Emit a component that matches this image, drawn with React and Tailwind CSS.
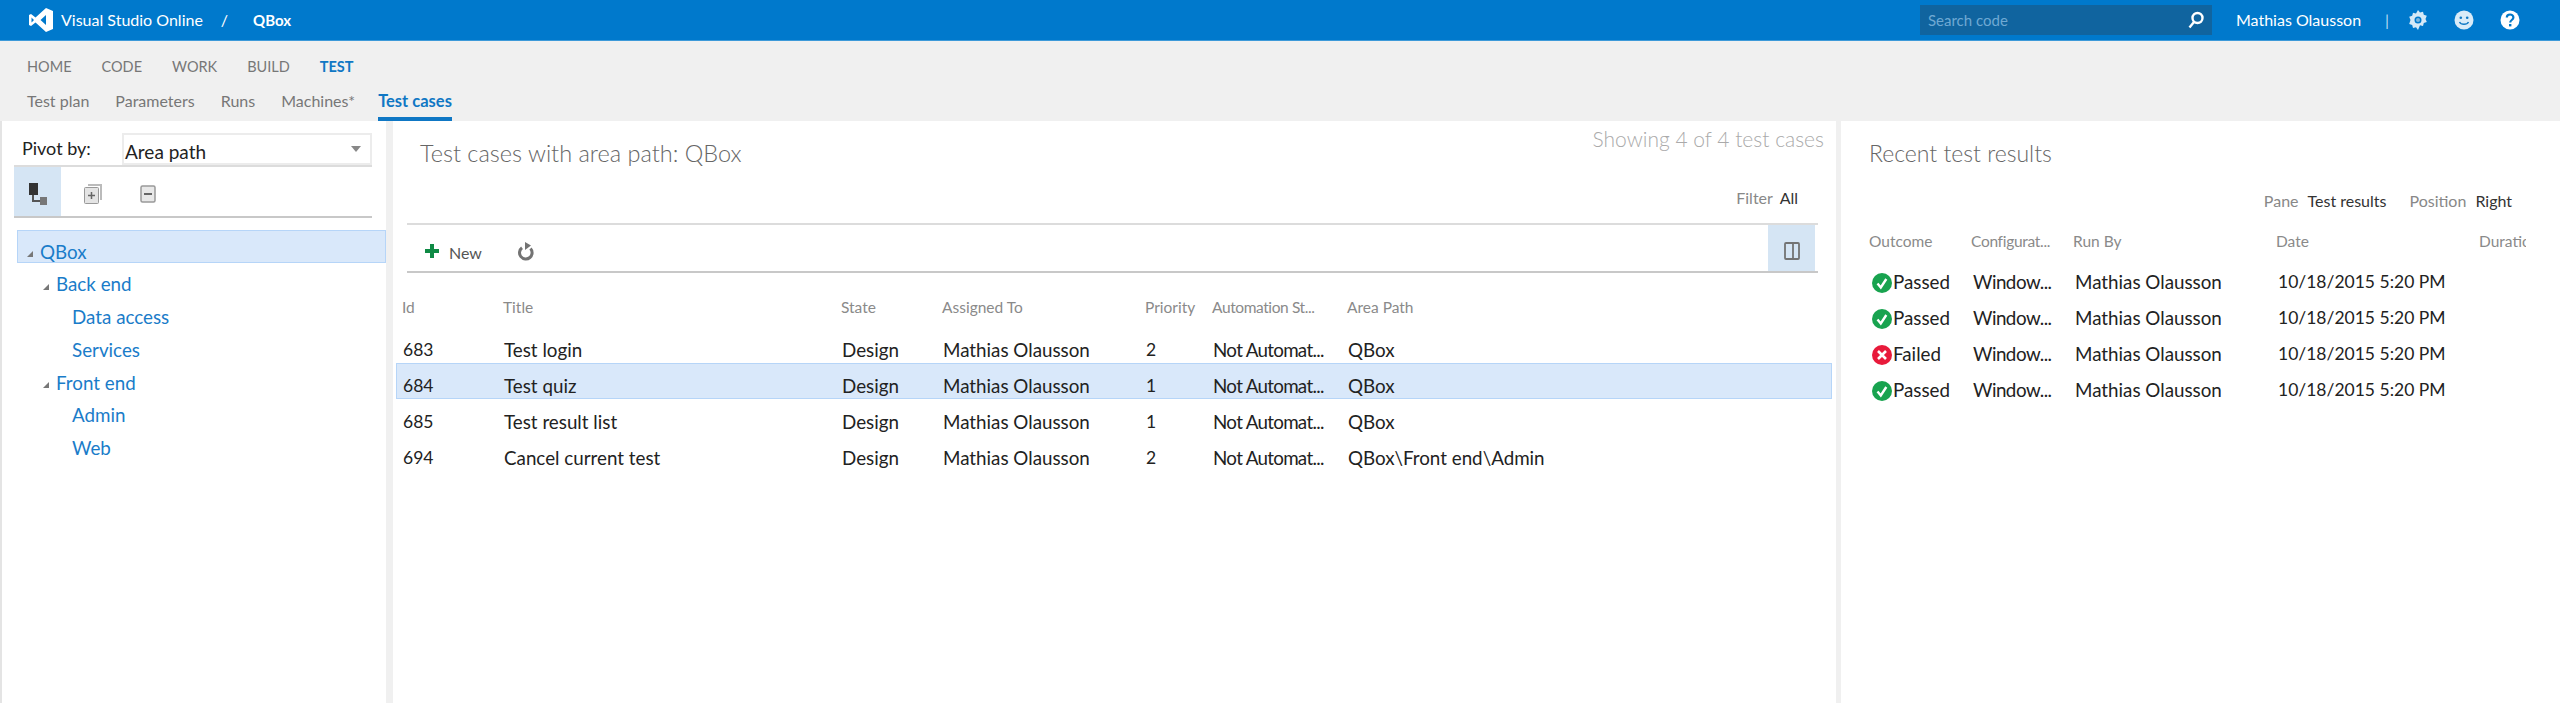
import React from "react";

const FONT = "font-['Lato','Open_Sans',sans-serif]";

const areaTree = [
  { label: "QBox", depth: 0, open: true, selected: true },
  { label: "Back end", depth: 1, open: true },
  { label: "Data access", depth: 2 },
  { label: "Services", depth: 2 },
  { label: "Front end", depth: 1, open: true },
  { label: "Admin", depth: 2 },
  { label: "Web", depth: 2 },
];

const testCases = [
  { id: 683, title: "Test login", priority: 2, area: "QBox" },
  { id: 684, title: "Test quiz", priority: 1, area: "QBox", selected: true },
  { id: 685, title: "Test result list", priority: 1, area: "QBox" },
  { id: 694, title: "Cancel current test", priority: 2, area: "QBox\\Front end\\Admin" },
];

const results = ["Passed", "Passed", "Failed", "Passed"];

function VsLogo() {
  return (
    <svg width="26" height="26" viewBox="0 0 26 26" className="ml-[28px] mr-[7px]">
      <path
        fill="#fff"
        fillRule="evenodd"
        d="M18 1l7 3v18l-7 3L7.5 15.5 3 19l-2-1V8l2-1 4.500 3.500zM18 8l-5.500 5 5.500 5zM3.500 10.500v5l2.500-2.500z"
      />
    </svg>
  );
}

function SearchIcon() {
  return (
    <svg width="18" height="18" viewBox="0 0 18 18" fill="none" stroke="#fff" strokeWidth="2.4">
      <circle cx="10.500" cy="7" r="5" />
      <path d="M7 11l-4.500 5.500" />
    </svg>
  );
}

function GearIcon() {
  return (
    <svg width="20" height="22" viewBox="0 0 20 22">
      <path
        fill="#d5e9f7"
        fillRule="evenodd"
        d="M10 1l2 2.500 3-.8 .8 3 3 1-1.300 3.300 1.300 3-3 1-.8 3-3-.8L10 21l-2-2.800-3 .8-.8-3-3-1L2.500 11 1.200 7.700l3-1 .8-3 3 .8zM10 7.500a3.500 3.500 0 1 0 0 7 3.500 3.500 0 0 0 0-7z"
      />
      <circle cx="10" cy="11" r="2" fill="#7db5dd" />
    </svg>
  );
}

function SmileIcon() {
  return (
    <svg width="20" height="20" viewBox="0 0 20 20">
      <circle cx="10" cy="10" r="9.500" fill="#d9ebf8" />
      <circle cx="6.800" cy="7.800" r="1.300" fill="#0f78c4" />
      <circle cx="13.200" cy="7.800" r="1.300" fill="#0f78c4" />
      <path d="M5.500 12c1.500 3 7.500 3 9 0" fill="none" stroke="#0f78c4" strokeWidth="1.400" />
    </svg>
  );
}

function HelpIcon() {
  return (
    <svg width="20" height="20" viewBox="0 0 20 20">
      <circle cx="10" cy="10" r="9.500" fill="#fff" />
      <path
        d="M6.800 7.500c0-4 6.600-4 6.600 0 0 2.500-3.200 2.500-3.200 5"
        fill="none"
        stroke="#0078c9"
        strokeWidth="2.200"
      />
      <rect x="9" y="14" width="2.400" height="2.400" fill="#0078c9" />
    </svg>
  );
}

function TreeViewIcon() {
  return (
    <svg width="20" height="24" viewBox="0 0 20 24">
      <rect x="1" y="1" width="9" height="12" fill="#333" />
      <path d="M5 13v6h8" fill="none" stroke="#555" strokeWidth="2" />
      <rect x="12" y="15" width="7" height="8" fill="#777" />
    </svg>
  );
}

function ExpandAllIcon() {
  return (
    <svg width="20" height="22" viewBox="0 0 20 22">
      <path d="M5 1h14v16h-2V3H5z" fill="#bbb" />
      <rect x="1.500" y="4.500" width="14" height="16" rx="1" fill="#e4e4e4" stroke="#999" />
      <path d="M5 12.500h7M8.500 9v7" stroke="#666" strokeWidth="1.500" />
    </svg>
  );
}

function CollapseAllIcon() {
  return (
    <svg width="16" height="20" viewBox="0 0 16 20">
      <rect x="1" y="2" width="14" height="16" rx="1.500" fill="#e8e8e8" stroke="#999" strokeWidth="1.500" />
      <path d="M4 10h8" stroke="#666" strokeWidth="2" />
    </svg>
  );
}

function TreeArrow() {
  return (
    <svg width="8" height="8" viewBox="0 0 8 8" className="mr-[6px] mt-[4px] shrink-0">
      <path d="M7 1v6H1z" fill="#777" />
    </svg>
  );
}

function PlusIcon() {
  return (
    <svg width="14" height="14" viewBox="0 0 14 14">
      <path d="M5 0h4v5h5v4H9v5H5V9H0V5h5z" fill="#0f8a45" />
    </svg>
  );
}

function RefreshIcon() {
  return (
    <svg width="18" height="20" viewBox="0 0 18 20">
      <path d="M13.500 6.500a6.300 6.300 0 1 1-8.500-.8" fill="none" stroke="#737373" strokeWidth="3" />
      <path d="M8 0v8l6-4.500z" fill="#737373" />
    </svg>
  );
}

function PaneIcon() {
  return (
    <svg width="16" height="18" viewBox="0 0 16 18">
      <rect x="1" y="1" width="14" height="16" rx="1" fill="none" stroke="#737373" strokeWidth="1.800" />
      <path d="M9 1v16" stroke="#737373" strokeWidth="1.800" />
    </svg>
  );
}

function OutcomeIcon({ outcome }) {
  if (outcome === "Failed") {
    return (
      <svg width="20" height="20" viewBox="0 0 20 20" className="mt-[2px] shrink-0">
        <circle cx="10" cy="10" r="10" fill="#e81a3b" />
        <path d="M6 6l8 8M14 6l-8 8" stroke="#fff" strokeWidth="2.600" />
      </svg>
    );
  }
  return (
    <svg width="20" height="20" viewBox="0 0 20 20" className="mt-[2px] shrink-0">
      <circle cx="10" cy="10" r="10" fill="#18a34f" />
      <path d="M5.500 10.500l3.300 4 5.500-8.500" fill="none" stroke="#fff" strokeWidth="2.400" />
    </svg>
  );
}

function Header() {
  return (
    <div className="flex h-[41px] items-center bg-[#0079cc] border-b border-[#3d9ad9] text-white text-[16px]">
      <VsLogo />
      <span>Visual Studio Online</span>
      <span className="ml-[18px]">/</span>
      <span className="ml-[25px] text-[15px] font-bold">QBox</span>
      <div className="ml-auto flex h-[30px] w-[292px] items-center justify-between bg-[#10649f] pl-[8px] pr-[7px] text-[#6fa9d3] text-[15px]">
        <span>Search code</span>
        <SearchIcon />
      </div>
      <span className="ml-[24px] w-[127px] whitespace-nowrap">Mathias Olausson</span>
      <span className="ml-[22px] text-[#b9dcf3]">|</span>
      <div className="ml-[19px] mr-[40px] flex items-center gap-[26px]">
        <GearIcon />
        <SmileIcon />
        <HelpIcon />
      </div>
    </div>
  );
}

function Nav() {
  const top = ["HOME", "CODE", "WORK", "BUILD"];
  const sub = ["Test plan", "Parameters", "Runs", "Machines*"];
  return (
    <div className="h-[80px] bg-[#f0f0f0] pl-[27px] pt-[16px]">
      <div className="flex h-[20px] items-center gap-[30px] text-[14.500px] text-[#777]">
        {top.map((t) => (
          <span key={t}>{t}</span>
        ))}
        <span className="font-bold text-[#0f77c4]">TEST</span>
      </div>
      <div className="mt-[12px] flex h-[32px] gap-[26px] text-[16px] text-[#777]">
        {sub.map((t) => (
          <span key={t} className="leading-[24px]">{t}</span>
        ))}
        <span className="-ml-[3px] border-b-4 border-[#0f77c4] text-[16.500px] font-bold leading-[24px] text-[#0f77c4]">
          Test cases
        </span>
      </div>
    </div>
  );
}

function LeftPanel() {
  return (
    <div className="h-full w-[393px] shrink-0 border-l-2 border-r-[7px] border-l-[#e4e4e4] border-r-[#f0f0f0]">
      <div className="ml-[12px] w-[358px]">
        <div className="flex h-[46px] items-end border-b-2 border-[#dcdcdc] text-[18px]">
          <span className="mb-[3px] ml-[8px] w-[100px] text-[#222]">Pivot by:</span>
          <div className="flex h-[32px] flex-1 items-center justify-between border-2 border-[#ececec] pl-[1px] pr-[9px] text-[19px] text-[#222]">
            <span className="pt-[6px]">Area path</span>
            <svg width="10" height="6" viewBox="0 0 10 6"><path d="M0 0h10L5 6z" fill="#888" /></svg>
          </div>
        </div>
        <div className="flex h-[51px] items-center border-b-2 border-[#c8c8c8]">
          <div className="flex h-full w-[47px] items-center justify-center bg-[#d5e5f4] pt-[5px]">
            <TreeViewIcon />
          </div>
          <div className="ml-[22px] pt-[5px]"><ExpandAllIcon /></div>
          <div className="ml-[37px] pt-[5px]"><CollapseAllIcon /></div>
        </div>
      </div>
      <div className="ml-[15px] mt-[12px] text-[18.800px] text-[#1a7cc9]">
        {areaTree.map((n) => (
          <div
            key={n.label}
            className={`flex h-[32.700px] items-center border pt-[11px] ${
              n.selected ? "border-[#b6d5f8] bg-[#d9e8fa]" : "border-transparent"
            } ${n.depth === 0 ? "pl-[8px]" : n.depth === 1 ? "pl-[24px]" : "pl-[38px]"}`}
          >
            {n.open ? <TreeArrow /> : <span className="w-[16px]" />}
            <span>{n.label}</span>
          </div>
        ))}
      </div>
    </div>
  );
}

function CenterPanel() {
  const cols = "grid grid-cols-[101px_338px_101px_203px_67px_135px_1fr] items-center";
  return (
    <div className="h-full w-[1448px] shrink-0 border-r-[5px] border-[#f0f0f0]">
      <div className="flex h-[102px] pl-[27px] pr-[12px]">
        <h1 className="mt-[15px] text-[23.500px] font-light text-[#666]">Test cases with area path: QBox</h1>
        <div className="ml-auto flex flex-col items-end">
          <span className="mt-[2px] text-[21px] font-light text-[#aaa]">Showing 4 of 4 test cases</span>
          <span className="mr-[26px] mt-[31px] text-[16px] text-[#888]">
            Filter <span className="ml-[3px] text-[#333]">All</span>
          </span>
        </div>
      </div>
      <div className="ml-[14px] mr-[18px] flex h-[50px] items-center border-y-2 border-t-[#dcdcdc] border-b-[#c8c8c8] text-[16px] text-[#555]">
        <div className="ml-[18px] pt-[5px]"><PlusIcon /></div>
        <span className="ml-[10px] pt-[9px]">New</span>
        <div className="ml-[35px] pt-[8px]"><RefreshIcon /></div>
        <div className="ml-auto mr-[3px] flex h-full w-[47px] items-center justify-center bg-[#d5e5f4] pt-[5px]">
          <PaneIcon />
        </div>
      </div>
      <div className={`${cols} ml-[3px] mt-[23px] h-[24px] pl-[6px] text-[15.500px] text-[#8a8a8a]`}>
        <span>Id</span>
        <span>Title</span>
        <span>State</span>
        <span>Assigned To</span>
        <span>Priority</span>
        <span className="tracking-[-0.4px]">Automation St...</span>
        <span>Area Path</span>
      </div>
      <div className="ml-[3px] mr-[4px] mt-[7px] text-[18.800px] text-[#222]">
        {testCases.map((t) => (
          <div
            key={t.id}
            className={`${cols} h-[36px] border pl-[6px] pt-[8px] ${
              t.selected ? "border-[#b6d5f8] bg-[#d9e8fa]" : "border-transparent"
            }`}
          >
            <span className="text-[17.500px]">{t.id}</span>
            <span>{t.title}</span>
            <span>Design</span>
            <span>Mathias Olausson</span>
            <span className="text-[17.500px]">{t.priority}</span>
            <span className="tracking-[-0.7px]">Not Automat...</span>
            <span>{t.area}</span>
          </div>
        ))}
      </div>
    </div>
  );
}

function RightPanel() {
  const cols = "grid grid-cols-[102px_102px_203px_203px_47px] items-center";
  return (
    <div className="h-full flex-1 overflow-hidden pl-[28px]">
      <h2 className="mt-[15px] h-[40px] text-[23px] font-light text-[#666]">Recent test results</h2>
      <div className="mr-[48px] mt-[13px] flex h-[24px] items-center justify-end text-[16px] text-[#888]">
        <span>Pane</span>
        <span className="ml-[9px] text-[#333]">Test results</span>
        <span className="ml-[23px]">Position</span>
        <span className="ml-[9px] text-[#333]">Right</span>
      </div>
      <div className={`${cols} mt-[17px] h-[24px] text-[15.500px] text-[#8a8a8a]`}>
        <span>Outcome</span>
        <span className="tracking-[-0.3px]">Configurat...</span>
        <span>Run By</span>
        <span>Date</span>
        <span className="overflow-hidden whitespace-nowrap">Duration</span>
      </div>
      <div className="mt-[10px] text-[18.800px] text-[#222]">
        {results.map((r, i) => (
          <div key={i} className={`${cols} h-[36px]`}>
            <span className="flex items-center pl-[3px]">
              <OutcomeIcon outcome={r} />
              <span className="ml-[1px]">{r}</span>
            </span>
            <span className="pl-[2px] tracking-[-0.5px]">Window...</span>
            <span className="pl-[2px]">Mathias Olausson</span>
            <span className="whitespace-nowrap pl-[2px] text-[17.500px]">10/18/2015 5:20 PM</span>
          </div>
        ))}
      </div>
    </div>
  );
}

export default function App() {
  return (
    <div className={`${FONT} flex h-[703px] w-[2560px] flex-col overflow-hidden bg-white`}>
      <Header />
      <Nav />
      <div className="flex min-h-0 flex-1">
        <LeftPanel />
        <CenterPanel />
        <RightPanel />
      </div>
    </div>
  );
}
